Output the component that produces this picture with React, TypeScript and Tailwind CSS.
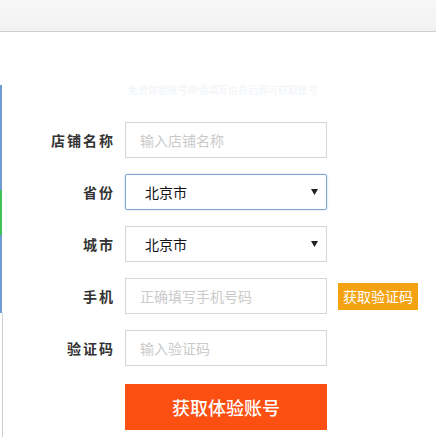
import React from "react";

const cjk = { fontFamily: '"Noto Sans CJK SC", "Liberation Sans", sans-serif' };

function Label({ text }: { text: string }) {
  return (
    <div className="w-[112px] shrink-0 text-right text-[14px] font-bold text-[#333] tracking-[2px] leading-[36px]">
      {text}
    </div>
  );
}

function TextInput({ placeholder }: { placeholder: string }) {
  return (
    <div className="ml-[10px] w-[202px] h-[36px] border border-[#d6d6d6] bg-white flex items-center pl-[14px] text-[14px] text-[#cacaca]">
      {placeholder}
    </div>
  );
}

function SelectBox({ value, focused }: { value: string; focused?: boolean }) {
  return (
    <div
      className={
        focused
          ? "ml-[10px] w-[202px] h-[36px] border border-[#7fa8d4] shadow-[0_0_2px_rgba(100,150,210,0.5)] rounded-[2px] bg-white flex items-center justify-between pl-[19px] pr-[8px]"
          : "ml-[10px] w-[202px] h-[36px] border border-[#d6d6d6] bg-white flex items-center justify-between pl-[19px] pr-[8px]"
      }
    >
      <span className="text-[14px] text-[#111]">{value}</span>
      <svg width="7" height="6" viewBox="0 0 7 6">
        <path d="M0 0 H7 L3.5 6 Z" fill="#222" />
      </svg>
    </div>
  );
}

export default function App() {
  return (
    <div className="w-[436px] h-[437px] bg-white overflow-hidden flex flex-col" style={cjk}>
      <div className="h-[32px] shrink-0 bg-gradient-to-b from-[#f7f7f7] to-[#f1f1f1] border-b border-[#cfcfcf]" />
      <div className="flex flex-1">
        <div className="w-[3px] shrink-0 flex flex-col">
          <div className="h-[53px]" />
          <div className="h-[105px] w-[2px] bg-[#6f9bd3]" />
          <div className="h-[45px] w-[2px] bg-[#3fc15a]" />
          <div className="h-[78px] w-[2px] bg-[#6f9bd3]" />
          <div className="flex-1 w-[3px] flex justify-end">
            <div className="w-[1px] bg-[#cfcfcf]" />
          </div>
        </div>
        <div className="flex-1 flex flex-col">
          <div className="mt-[52px] ml-[125px] w-[195px] h-[12px] text-[10px] leading-[12px] text-[#f0f4f8] whitespace-nowrap">
            免费体验账号申请填写信息后即可获取账号
          </div>
          <div className="mt-[26px] flex flex-col gap-[16px]">
            <div className="flex items-center">
              <Label text="店铺名称" />
              <TextInput placeholder="输入店铺名称" />
            </div>
            <div className="flex items-center">
              <Label text="省份" />
              <SelectBox value="北京市" focused />
            </div>
            <div className="flex items-center">
              <Label text="城市" />
              <SelectBox value="北京市" />
            </div>
            <div className="flex items-center">
              <Label text="手机" />
              <TextInput placeholder="正确填写手机号码" />
              <div className="ml-[11px] w-[80px] h-[27px] bg-[#f4a212] text-white text-[14px] flex items-center justify-center">
                获取验证码
              </div>
            </div>
            <div className="flex items-center">
              <Label text="验证码" />
              <TextInput placeholder="输入验证码" />
            </div>
          </div>
          <div className="mt-[18px] ml-[122px] w-[202px] h-[46px] bg-[#fc4f12] text-white text-[18px] font-medium flex items-center justify-center">
            获取体验账号
          </div>
        </div>
      </div>
    </div>
  );
}
